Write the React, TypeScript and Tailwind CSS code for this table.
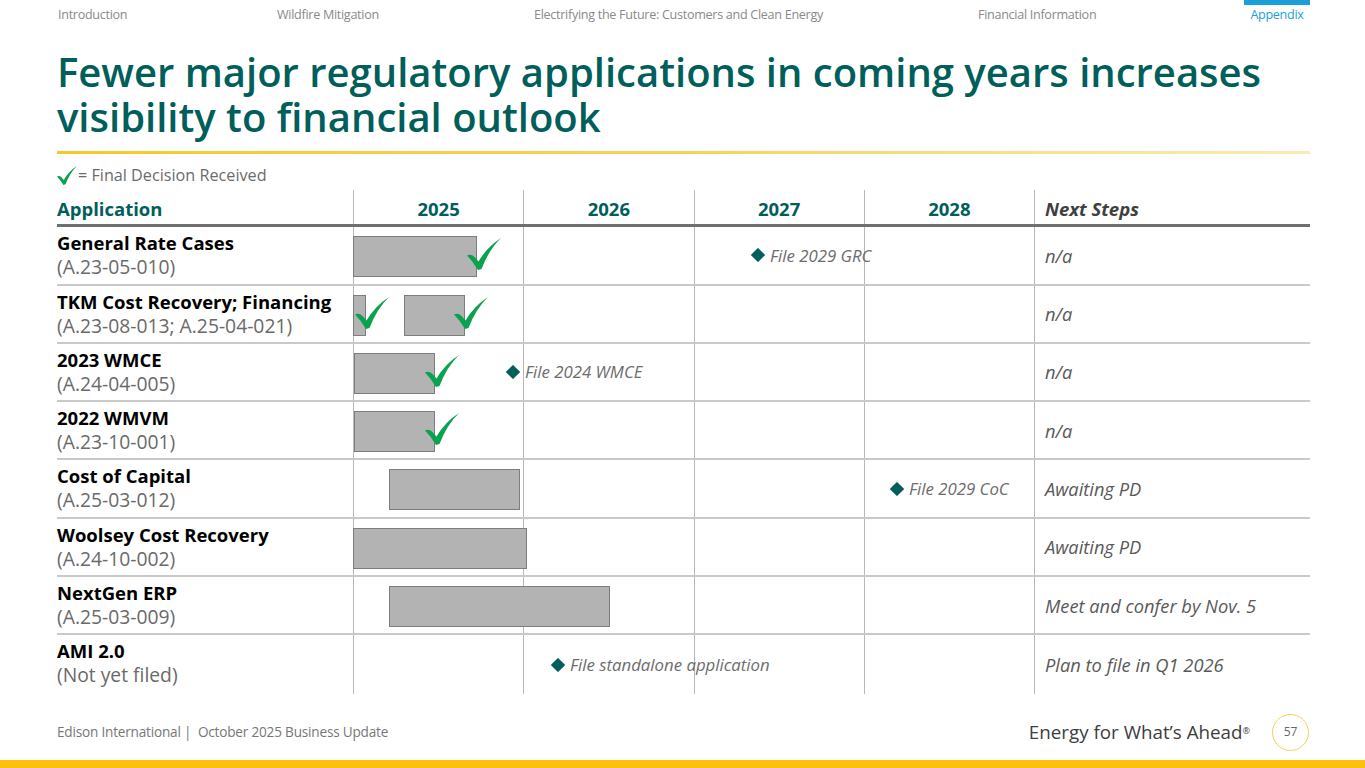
import React from "react";

type Bar = { left: number; width: number; check?: number };
type Milestone = { left: number; label: string };
type Row = {
  name: string;
  code: string;
  bars: Bar[];
  milestone?: Milestone;
  next: string;
};

const rows: Row[] = [
  {
    name: "General Rate Cases",
    code: "(A.23-05-010)",
    bars: [{ left: 0, width: 124, check: 114 }],
    milestone: { left: 400, label: "File 2029 GRC" },
    next: "n/a",
  },
  {
    name: "TKM Cost Recovery; Financing",
    code: "(A.23-08-013; A.25-04-021)",
    bars: [
      { left: 0, width: 13, check: 2 },
      { left: 51, width: 61, check: 101 },
    ],
    next: "n/a",
  },
  {
    name: "2023 WMCE",
    code: "(A.24-04-005)",
    bars: [{ left: 1, width: 81, check: 72 }],
    milestone: { left: 155, label: "File 2024 WMCE" },
    next: "n/a",
  },
  {
    name: "2022 WMVM",
    code: "(A.23-10-001)",
    bars: [{ left: 1, width: 81, check: 72 }],
    next: "n/a",
  },
  {
    name: "Cost of Capital",
    code: "(A.25-03-012)",
    bars: [{ left: 36, width: 131 }],
    milestone: { left: 539, label: "File 2029 CoC" },
    next: "Awaiting PD",
  },
  {
    name: "Woolsey Cost Recovery",
    code: "(A.24-10-002)",
    bars: [{ left: 0, width: 174 }],
    next: "Awaiting PD",
  },
  {
    name: "NextGen ERP",
    code: "(A.25-03-009)",
    bars: [{ left: 36, width: 221 }],
    next: "Meet and confer by Nov. 5",
  },
  {
    name: "AMI 2.0",
    code: "(Not yet filed)",
    bars: [],
    milestone: { left: 200, label: "File standalone application" },
    next: "Plan to file in Q1 2026",
  },
];

function Check({ className = "" }: { className?: string }) {
  return (
    <svg viewBox="0 0 34 32" className={className}>
      <path
        d="M0 17.5 Q4 15.5 7.5 19 L11.5 23.5 Q20 9 34 0 Q22 11.5 14.5 31 L11 32 Q6 23.5 0 17.5 Z"
        fill="#0aa24f"
      />
    </svg>
  );
}

function Diamond() {
  return <div className="h-[10px] w-[10px] rotate-45 bg-[#005e5b] shadow-[0_0_1px_#9ab]" />;
}

export default function App() {
  return (
    <div className="relative h-[768px] w-[1365px] overflow-hidden bg-white font-['Open_Sans',sans-serif]">
      {/* Section nav */}
      <div className="flex h-[30px] text-[12.6px] tracking-[-0.3px] text-[#8a8a8a]">
        <div className="w-[277px] pl-[58px] pt-[6px]">Introduction</div>
        <div className="w-[257px] pt-[6px]">Wildfire Mitigation</div>
        <div className="w-[444px] pt-[6px]">Electrifying the Future: Customers and Clean Energy</div>
        <div className="w-[266px] pt-[6px]">Financial Information</div>
        <div className="flex w-[66px] flex-col items-center">
          <div className="h-[5px] w-full bg-[#1a9fd9]" />
          <div className="pt-[1px] text-[#1a9fd9]">Appendix</div>
        </div>
      </div>

      {/* Title */}
      <h1 className="mt-[19px] pl-[57px] text-[40px] font-semibold leading-[45px] text-[#005e5b]">
        Fewer major regulatory applications in coming years increases
        <br />
        visibility to financial outlook
      </h1>
      <div className="ml-[57px] mt-[12px] h-[3px] w-[1253px] bg-gradient-to-r from-[#f6c828] via-[#f8d257] to-[#fdeab0]" />

      {/* Legend */}
      <div className="mt-[9px] flex items-center pl-[57px] text-[16.2px] text-[#6b6b6b]">
        <Check className="h-[19px] w-[20px]" />
        <span className="ml-[1px]">= Final Decision Received</span>
      </div>

      {/* Table */}
      <div className="ml-[57px] mt-[3px] w-[1253px]">
        <div className="flex h-[37px] border-b-[3px] border-[#6f6f6f] pt-[4px] text-[18.5px] font-bold text-[#005e5b]">
          <div className="flex w-[296px] items-center">Application</div>
          {["2025", "2026", "2027", "2028"].map((y) => (
            <div key={y} className="-mt-[4px] flex w-[170.25px] items-center justify-center border-l border-[#b8b8b8] pt-[4px]">
              {y}
            </div>
          ))}
          <div className="-mt-[4px] flex flex-1 items-center border-l border-[#b8b8b8] pl-[10px] pt-[4px] italic text-[#3f3f3f]">
            Next Steps
          </div>
        </div>

        {rows.map((r, i) => (
          <div
            key={r.name}
            className={
              i < rows.length - 1
                ? "flex h-[58.3px] border-b-2 border-[#c9c9c9]"
                : "flex h-[58.3px]"
            }
          >
            <div className="w-[296px] pt-[4px] leading-[24px]">
              <div className="text-[18.5px] font-bold text-black">{r.name}</div>
              <div className="text-[19.3px] text-[#6a6a6a]">{r.code}</div>
            </div>
            <div className="relative flex w-[681px]">
              {[0, 1, 2, 3].map((c) => (
                <div key={c} className="w-[170.25px] border-l border-[#b8b8b8]" />
              ))}
              {r.bars.map((b, j) => (
                <div
                  key={j}
                  className="absolute top-[9px] h-[41px] border border-[#7d7d7d] bg-[#b3b3b3]"
                  style={{ left: b.left, width: b.width }}
                />
              ))}
              {r.bars.map((b, j) =>
                b.check !== undefined ? (
                  <div key={"c" + j} className="absolute top-[11px]" style={{ left: b.check }}>
                    <Check className="h-[32px] w-[34px]" />
                  </div>
                ) : null
              )}
              {r.milestone && (
                <div
                  className="absolute top-0 flex h-full items-center gap-[7px] text-[16.8px] italic text-[#6d6d6d]"
                  style={{ left: r.milestone.left }}
                >
                  <Diamond />
                  <span>{r.milestone.label}</span>
                </div>
              )}
            </div>
            <div className="flex flex-1 items-center border-l border-[#b8b8b8] pl-[10px] text-[18.3px] italic text-[#595959]">
              {r.next}
            </div>
          </div>
        ))}
      </div>

      {/* Footer */}
      <div className="absolute bottom-[11px] left-0 flex h-[50px] w-full items-center">
        <div className="pl-[57px] text-[13.6px] tracking-[-0.2px] text-[#777]">
          Edison International |&nbsp; October 2025 Business Update
        </div>
        <div className="ml-auto flex items-center">
          <span className="text-[18.8px] text-[#3d3d3d]">
            Energy for What’s Ahead<sup className="text-[9px]">®</sup>
          </span>
          <div className="ml-[22px] mr-[56px] flex h-[37px] w-[37px] items-center justify-center rounded-full border border-[#f2d35a] text-[12px] text-[#666]">
            57
          </div>
        </div>
      </div>
      <div className="absolute bottom-0 left-0 h-[8px] w-full bg-[#fcc10f]" />
    </div>
  );
}
